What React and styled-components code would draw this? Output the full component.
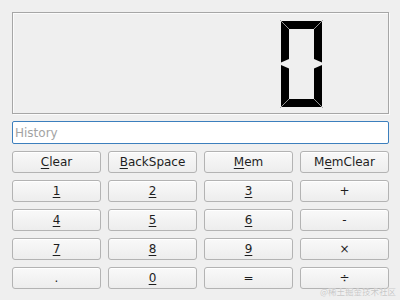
import React from 'react';
import styled, { createGlobalStyle } from 'styled-components';

const GlobalStyle = createGlobalStyle`
  html, body {
    margin: 0;
    padding: 0;
    background: #efefef;
  }
  body {
    font-family: "DejaVu Sans", "Liberation Sans", sans-serif;
  }
`

const Window = styled.div`
  position: relative;
  width: 400px;
  height: 300px;
  box-sizing: border-box;
  padding: 12px 11px 0 12px;
  display: flex;
  flex-direction: column;
  gap: 7px;
  background: #efefef;
`

const Display = styled.div`
  height: 102px;
  box-sizing: border-box;
  border: 1px solid #a6a6a6;
  box-shadow: inset 1px 1px 0 #fbfbfb, 1px 1px 0 #fbfbfb;
  display: flex;
  justify-content: flex-end;
  align-items: flex-start;
  padding: 7px 64px 0 0;
`

const History = styled.input`
  height: 23px;
  box-sizing: border-box;
  border: 1px solid #3c7fbd;
  border-radius: 2px;
  background: #fff;
  padding: 0 2px;
  font-family: "DejaVu Sans", sans-serif;
  font-size: 12px;
  color: #222;
  outline: none;
  &::placeholder {
    color: #a3a3a3;
  }
`

const Pad = styled.div`
  display: grid;
  grid-template-columns: repeat(4, 1fr);
  grid-auto-rows: 22px;
  column-gap: 7px;
  row-gap: 7px;
`

const Key = styled.button`
  box-sizing: border-box;
  margin: 0;
  padding: 0;
  border: 1px solid #b3b3b3;
  border-radius: 3px;
  background: linear-gradient(#f9f9f9, #ededed);
  box-shadow: inset 0 1px 0 #ffffff;
  font-family: "DejaVu Sans", sans-serif;
  font-size: 12px;
  color: #1e1e1e;
  line-height: 20px;
  text-align: center;
  u {
    text-decoration: underline;
    text-underline-offset: 2px;
    text-decoration-thickness: 1px;
  }
`

const Watermark = styled.div`
  position: absolute;
  right: 4px;
  bottom: 3px;
  font-family: "Noto Sans CJK SC", sans-serif;
  font-size: 8.5px;
  color: #c6c6c6;
  text-shadow: 0 0 1px #fff;
`

const SEG = '#000';
const BEV = '#9c9c9c';

function LcdZero() {
  return (
    <svg width="45" height="89" viewBox="0 0 45 89">
      <polygon points="2,1 43,1 35,9 10,9" fill={SEG} />
      <polygon points="2,1 10,9 10,39 2,42.5" fill={SEG} />
      <polygon points="43,1 35,9 35,39 43,42.5" fill={SEG} />
      <polygon points="2,45 10,48.5 10,79 2,87" fill={SEG} />
      <polygon points="43,45 35,48.5 35,79 43,87" fill={SEG} />
      <polygon points="2,87 43,87 35,79 10,79" fill={SEG} />
      <g stroke={BEV} strokeWidth="0.9">
        <line x1="1" y1="0" x2="10" y2="9" />
        <line x1="44" y1="0" x2="35" y2="9" />
        <line x1="1" y1="88" x2="10" y2="79" />
        <line x1="44" y1="88" x2="35" y2="79" />
      </g>
    </svg>
  );
}

const keys = [
  [<><u>C</u>lear</>],
  [<><u>B</u>ackSpace</>],
  [<><u>M</u>em</>],
  [<>M<u>e</u>mClear</>],
  [<u>1</u>], [<u>2</u>], [<u>3</u>], ['+'],
  [<u>4</u>], [<u>5</u>], [<u>6</u>], ['-'],
  [<u>7</u>], [<u>8</u>], [<u>9</u>], ['×'],
  ['.'], [<u>0</u>], ['='], ['÷'],
];

export default function App() {
  return (
    <Window>
      <GlobalStyle />
      <Display>
        <LcdZero />
      </Display>
      <History placeholder="History" />
      <Pad>
        {keys.map(([label], i) => (
          <Key key={i}>{label}</Key>
        ))}
      </Pad>
      <Watermark>@稀土掘金技术社区</Watermark>
    </Window>
  );
}
